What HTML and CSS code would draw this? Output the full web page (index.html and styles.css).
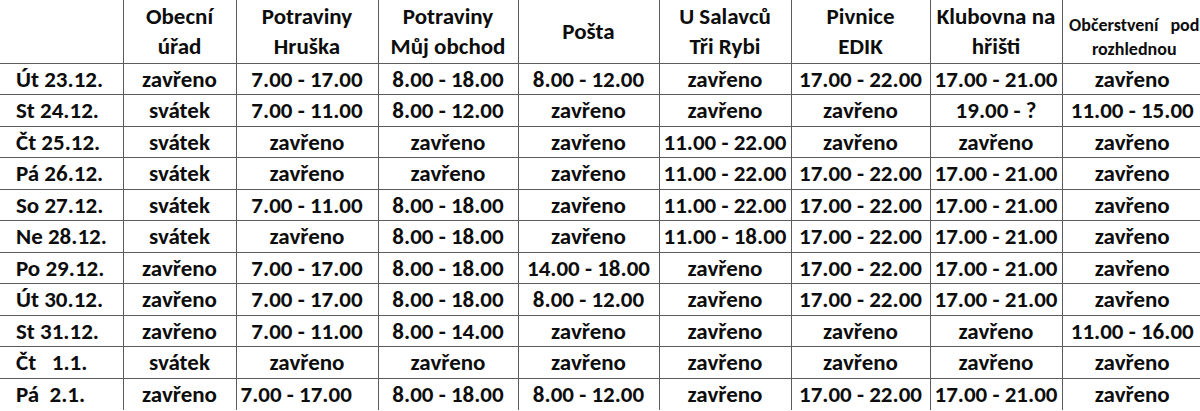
FILE: index.html
```html
<!DOCTYPE html>
<html lang="cs">
<head>
<meta charset="utf-8">
<title>Otevírací doba</title>
<link rel="stylesheet" href="styles.css">
</head>
<body>
<table class="hours">
  <colgroup>
    <col class="c-day"><col class="c-obec"><col class="c-hruska"><col class="c-muj"><col class="c-posta"><col class="c-salavcu"><col class="c-edik"><col class="c-klub"><col class="c-obcer">
  </colgroup>
  <thead>
    <tr class="head">
      <th></th>
      <th>Obecní<br>úřad</th>
      <th>Potraviny<br>Hruška</th>
      <th>Potraviny<br>Můj obchod</th>
      <th>Pošta</th>
      <th>U Salavců<br>Tři Rybi</th>
      <th>Pivnice<br>EDIK</th>
      <th>Klubovna na<br>hřišti</th>
      <th class="small">Občerstvení<span class="gap"></span>pod<br>rozhlednou</th>
    </tr>
  </thead>
  <tbody>
    <tr><td class="day">Út 23.12.</td><td>zavřeno</td><td>7.00 - 17.00</td><td>8.00 - 18.00</td><td>8.00 - 12.00</td><td>zavřeno</td><td>17.00 - 22.00</td><td>17.00 - 21.00</td><td>zavřeno</td></tr>
    <tr><td class="day">St 24.12.</td><td>svátek</td><td>7.00 - 11.00</td><td>8.00 - 12.00</td><td>zavřeno</td><td>zavřeno</td><td>zavřeno</td><td>19.00 - ?</td><td>11.00 - 15.00</td></tr>
    <tr><td class="day">Čt 25.12.</td><td>svátek</td><td>zavřeno</td><td>zavřeno</td><td>zavřeno</td><td>11.00 - 22.00</td><td>zavřeno</td><td>zavřeno</td><td>zavřeno</td></tr>
    <tr><td class="day">Pá 26.12.</td><td>svátek</td><td>zavřeno</td><td>zavřeno</td><td>zavřeno</td><td>11.00 - 22.00</td><td>17.00 - 22.00</td><td>17.00 - 21.00</td><td>zavřeno</td></tr>
    <tr><td class="day">So 27.12.</td><td>svátek</td><td>7.00 - 11.00</td><td>8.00 - 18.00</td><td>zavřeno</td><td>11.00 - 22.00</td><td>17.00 - 22.00</td><td>17.00 - 21.00</td><td>zavřeno</td></tr>
    <tr><td class="day">Ne 28.12.</td><td>svátek</td><td>zavřeno</td><td>8.00 - 18.00</td><td>zavřeno</td><td>11.00 - 18.00</td><td>17.00 - 22.00</td><td>17.00 - 21.00</td><td>zavřeno</td></tr>
    <tr><td class="day">Po 29.12.</td><td>zavřeno</td><td>7.00 - 17.00</td><td>8.00 - 18.00</td><td>14.00 - 18.00</td><td>zavřeno</td><td>17.00 - 22.00</td><td>17.00 - 21.00</td><td>zavřeno</td></tr>
    <tr><td class="day">Út 30.12.</td><td>zavřeno</td><td>7.00 - 17.00</td><td>8.00 - 18.00</td><td>8.00 - 12.00</td><td>zavřeno</td><td>17.00 - 22.00</td><td>17.00 - 21.00</td><td>zavřeno</td></tr>
    <tr><td class="day">St 31.12.</td><td>zavřeno</td><td>7.00 - 11.00</td><td>8.00 - 14.00</td><td>zavřeno</td><td>zavřeno</td><td>zavřeno</td><td>zavřeno</td><td>11.00 - 16.00</td></tr>
    <tr><td class="day">Čt   1.1.</td><td>svátek</td><td>zavřeno</td><td>zavřeno</td><td>zavřeno</td><td>zavřeno</td><td>zavřeno</td><td>zavřeno</td><td>zavřeno</td></tr>
    <tr class="last"><td class="day">Pá  2.1.</td><td>zavřeno</td><td class="left">7.00 - 17.00</td><td>8.00 - 18.00</td><td>8.00 - 12.00</td><td>zavřeno</td><td>17.00 - 22.00</td><td>17.00 - 21.00</td><td>zavřeno</td></tr>
  </tbody>
</table>
</body>
</html>
```
FILE: styles.css
```css
html, body {
  margin: 0;
  padding: 0;
  background: #fff;
  overflow: hidden;
}

.hours {
  border-collapse: collapse;
  table-layout: fixed;
  width: 1202px;
  font-family: "Carlito", "Liberation Sans", Arial, sans-serif;
  font-weight: bold;
  font-size: 23px;
  color: #0d0d0d;
}

.c-day { width: 123px; }
.c-obec { width: 113px; }
.c-hruska { width: 142px; }
.c-muj { width: 140px; }
.c-posta { width: 141px; }
.c-salavcu { width: 132px; }
.c-edik { width: 139px; }
.c-klub { width: 132px; }
.c-obcer { width: 140px; }

.hours th,
.hours td {
  padding: 0;
  text-align: center;
  vertical-align: middle;
  white-space: nowrap;
  border-left: 1px solid #5c5c5c;
  border-bottom: 1px solid #5c5c5c;
}

.hours th:first-child,
.hours td:first-child {
  border-left: none;
}

.head {
  height: 63px;
}

.head th {
  font-weight: bold;
  line-height: 30px;
}

.head th.small {
  font-size: 18px;
  line-height: 24px;
  vertical-align: top;
  padding-top: 13px;
  padding-left: 4px;
}

.gap {
  display: inline-block;
  width: 12px;
}

.hours tbody tr {
  height: 31.5px;
}

.hours td.day {
  text-align: left;
  padding-left: 16px;
  white-space: pre;
}

.hours td.left {
  text-align: left;
  padding-left: 4px;
}

.hours tr.last td {
  border-bottom: none;
}
```
